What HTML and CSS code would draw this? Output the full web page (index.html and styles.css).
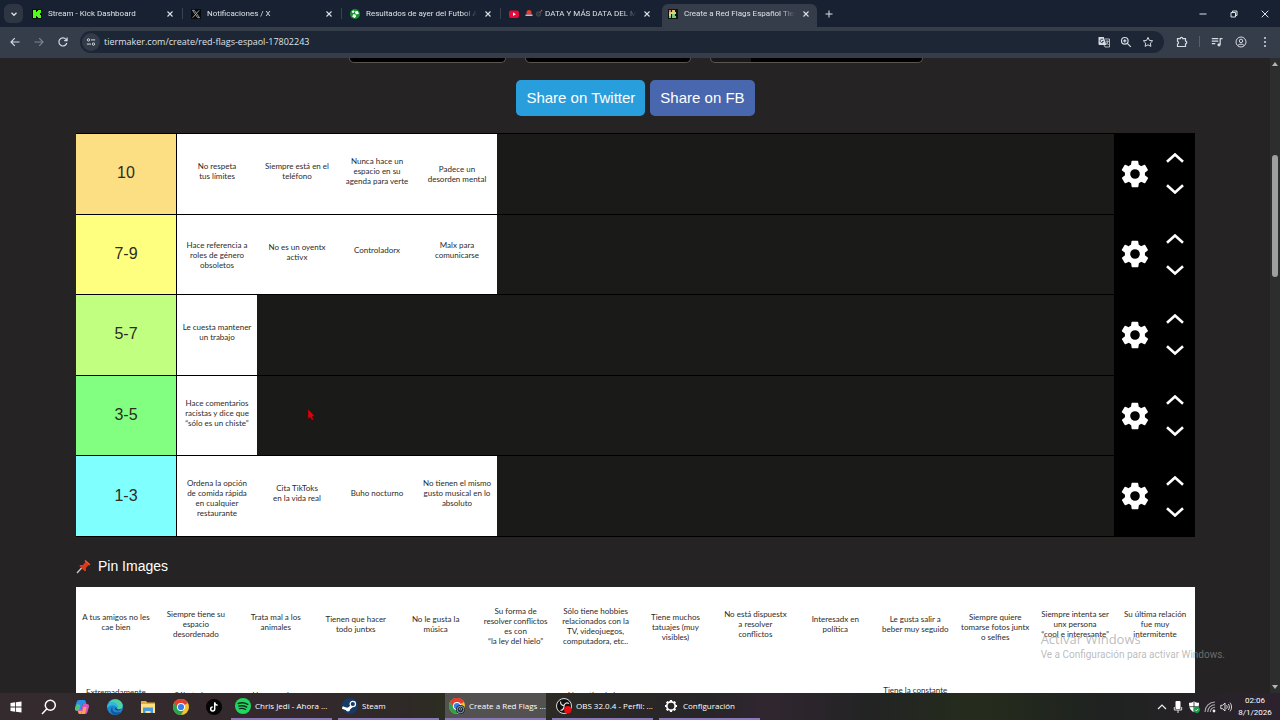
FILE: index.html
```html
<!DOCTYPE html>
<html lang="es">
<head>
<meta charset="utf-8">
<title>Create a Red Flags Español Tier List</title>
<link rel="stylesheet" href="styles.css">
</head>
<body>
<svg class="defs" aria-hidden="true">
  <symbol id="i-x" viewBox="0 0 10 10"><path d="M2.5 2.5l5 5m0-5l-5 5" fill="none" stroke="currentColor" stroke-width="1.1"/></symbol>
  <symbol id="i-gear" viewBox="0 0 24 24"><path fill="currentColor" fill-rule="evenodd" d="M19.4 13a7.500 7.500 0 0 0 0-2l2.100-1.600a.5.5 0 0 0 .1-.7l-2-3.400a.5.5 0 0 0-.6-.2l-2.500 1a7.300 7.300 0 0 0-1.700-1l-.4-2.700a.5.5 0 0 0-.5-.4h-4a.5.5 0 0 0-.5.4L9 5.100a7.700 7.700 0 0 0-1.700 1l-2.500-1a.5.5 0 0 0-.6.2l-2 3.400a.5.5 0 0 0 .1.7L4.500 11a7.900 7.900 0 0 0 0 2l-2.100 1.600a.5.5 0 0 0-.1.700l2 3.400c.1.2.4.3.6.2l2.500-1c.5.4 1.100.7 1.700 1l.4 2.700c0 .2.200.4.5.4h4c.3 0 .5-.2.5-.4l.4-2.700a7.300 7.300 0 0 0 1.700-1l2.500 1c.2.1.5 0 .6-.2l2-3.400a.5.5 0 0 0-.1-.7zM12 15.600a3.600 3.600 0 1 1 0-7.200 3.600 3.600 0 0 1 0 7.200z"/></symbol>
  <symbol id="i-up" viewBox="0 0 18 10"><path d="M1 8.800L9 1.500l8 7.300" fill="none" stroke="currentColor" stroke-width="2.600"/></symbol>
  <symbol id="i-down" viewBox="0 0 18 10"><path d="M1 1.200L9 8.500l8-7.300" fill="none" stroke="currentColor" stroke-width="2.600"/></symbol>
  <symbol id="i-chrome" viewBox="0 0 16 16"><circle cx="8" cy="8" r="8" fill="#f5c32c"/><path d="M8 8L1.070 4A8 8 0 0 1 14.930 4z" fill="#e2402f"/><path d="M1.070 4A8 8 0 0 0 8 16l3.460-6L8 8 4.500 10z" fill="#2da24c"/><path d="M1.070 4L4.540 10 8 8V4z" fill="#2da24c"/><path d="M1.070 4A8 8 0 0 1 14.930 4H8a4 4 0 0 0-3.700 2.500L3 7.300z" fill="#e2402f"/><circle cx="8" cy="8" r="4" fill="#fff"/><circle cx="8" cy="8" r="3.100" fill="#3b7ded"/></symbol>
</svg>

<header class="tabstrip">
  <button class="tab-search" aria-label="Buscar pestañas"><svg viewBox="0 0 10 10"><path d="M2.500 3.800L5 6.300l2.500-2.500" fill="none" stroke="currentColor" stroke-width="1.300"/></svg></button>
  <nav class="tabs">
    <div class="tab"><svg class="favicon" viewBox="0 0 10 10"><path fill="#071207" d="M0 0h10v10H0z"/><path fill="#53fc18" d="M1 1h3v2h1V2h1V1h3v3H8v2h1v3H6V8H5V7H4v2H1z"/></svg><span class="tab-title">Stream - Kick Dashboard</span><button class="close" aria-label="Cerrar"><svg><use href="#i-x"/></svg></button></div>
    <div class="tab"><svg class="favicon" viewBox="0 0 10 10"><path fill="#08090b" d="M0 0h10v10H0z"/><path d="M1.500 1.300h1.800l5.200 7.400H6.700z" fill="none" stroke="#b9bcc0" stroke-width=".8"/><path d="M8.200 1.300L5.500 4.400M4.500 5.500L1.700 8.700" stroke="#b9bcc0" stroke-width=".8"/></svg><span class="tab-title">Notificaciones / X</span><button class="close" aria-label="Cerrar"><svg><use href="#i-x"/></svg></button></div>
    <div class="tab"><svg class="favicon" viewBox="0 0 10 10"><circle cx="5" cy="5" r="5" fill="#14922c"/><path fill="#fff" d="M1.500 2.500l2-1.300 1.200 1.600L3 4.300zM5.500 2L8 2.200l.8 2.500-2.200.7L5 4zM3.300 5.300l2.200.2.700 2.200-1.900 1.400L2.200 7.500z"/></svg><span class="tab-title">Resultados de ayer del Futbol A</span><button class="close" aria-label="Cerrar"><svg><use href="#i-x"/></svg></button></div>
    <div class="tab"><svg class="favicon" viewBox="0 0 10 10"><rect y="1.500" width="10" height="7.500" rx="2" fill="#e8093b"/><path d="M4 3.500v3.400l2.900-1.700z" fill="#fff"/></svg><span class="tab-title"><svg class="emoji" viewBox="0 0 8 8"><path fill="#ee3730" d="M1.500 5.500V3.500a2.500 2.500 0 0 1 5 0v2z"/><path fill="#b8c0ca" d="M.5 5.500h7V7h-7z"/></svg><svg class="emoji" viewBox="0 0 8 8"><circle cx="3.500" cy="5" r="2.300" fill="#30353c" stroke="#5c636c" stroke-width=".5"/><path d="M5 3.500l1.300-1.700" stroke="#8a8377" stroke-width=".8"/><circle cx="6.600" cy="1.500" r=".8" fill="#d7472c"/></svg>DATA Y MÁS DATA DEL M</span><button class="close" aria-label="Cerrar"><svg><use href="#i-x"/></svg></button></div>
    <div class="tab active"><svg class="favicon" viewBox="0 0 10 10"><path fill="#111" d="M0 0h10v10H0z"/><path fill="#d8796b" d="M1 1h2v2H1z"/><path fill="#e5bc70" d="M1 3h2v2H1zM4 1h3v2H4z"/><path fill="#d8d676" d="M1 5h2v2H1zM3 3h5v2H3z"/><path fill="#7bc77d" d="M1 7h2v2H1zM4 5h3v2H4zM4 7h4v2H4z"/></svg><span class="tab-title">Create a Red Flags Español Tier</span><button class="close" aria-label="Cerrar"><svg><use href="#i-x"/></svg></button></div>
  </nav>
  <button class="new-tab" aria-label="Nueva pestaña"><svg viewBox="0 0 10 10"><path d="M5 1.500v7M1.500 5h7" stroke="currentColor"/></svg></button>
  <div class="window-controls">
    <button aria-label="Minimizar"><svg viewBox="0 0 10 10"><path d="M1.500 5h7" stroke="currentColor"/></svg></button>
    <button aria-label="Restaurar"><svg viewBox="0 0 10 10"><path d="M2 3.500h4.500V8H2zM3.500 3.500V2H8v4.500H6.500" fill="none" stroke="currentColor"/></svg></button>
    <button aria-label="Cerrar ventana"><svg viewBox="0 0 10 10"><path d="M1.700 1.700l6.600 6.600m0-6.600L1.700 8.300" stroke="currentColor"/></svg></button>
  </div>
</header>

<div class="toolbar">
  <button class="tool" aria-label="Atrás"><svg viewBox="0 0 12 12"><path d="M10.500 6H2m3.800-3.800L2 6l3.800 3.800" fill="none" stroke="currentColor" stroke-width="1.200"/></svg></button>
  <button class="tool dim" aria-label="Adelante"><svg viewBox="0 0 12 12"><path d="M1.500 6H10M6.200 2.200L10 6 6.200 9.800" fill="none" stroke="currentColor" stroke-width="1.200"/></svg></button>
  <button class="tool" aria-label="Recargar"><svg viewBox="0 0 12 12"><path d="M9.800 7A4 4 0 1 1 9 3.400l1 1M10.100 1.600v3H7.200" fill="none" stroke="currentColor" stroke-width="1.200"/></svg></button>
  <div class="omnibox">
    <button class="site-info" aria-label="Información del sitio"><svg viewBox="0 0 12 12"><g fill="none" stroke="currentColor" stroke-width="1.200"><circle cx="3" cy="3.500" r="1.400"/><path d="M6 3.500h5M1 8.500h5"/><circle cx="9" cy="8.500" r="1.400"/></g></svg></button>
    <input class="url" aria-label="Dirección" value="tiermaker.com/create/red-flags-espaol-17802243">
    <button class="tool" aria-label="Traducir"><svg viewBox="0 0 12 12"><path fill="currentColor" d="M.5 1h5.300l2.500 8H1.500a1 1 0 0 1-1-1z"/><path d="M7 3h4.500v8H7l-1-2M7.500 5.200h3.400M9.200 4.500v.7M10.200 5.300c-.3 1.500-1.200 2.500-2.200 3.200M8.300 6.500l2.300 2.500" fill="none" stroke="currentColor" stroke-width=".8"/><path d="M5.300 4a1.700 1.700 0 1 0 .1 1.500H4" fill="none" stroke="#1e2636" stroke-width=".8"/></svg></button>
    <button class="tool" aria-label="Zoom"><svg viewBox="0 0 12 12"><g fill="none" stroke="currentColor" stroke-width="1.200"><circle cx="4.800" cy="4.800" r="3.300"/><path d="M7.300 7.300l3.500 3.500M3.200 4.800h3.200M4.800 3.200v3.200"/></g></svg></button>
    <button class="tool" aria-label="Favoritos"><svg viewBox="0 0 12 12"><path d="M6 1.400l1.400 3 3.300.4-2.400 2.300.6 3.300L6 8.800l-2.900 1.600.6-3.300L1.300 4.800l3.300-.4z" fill="none" stroke="currentColor"/></svg></button>
  </div>
  <div class="toolbar-end">
    <button class="tool" aria-label="Extensiones"><svg viewBox="0 0 12 12"><path d="M1.500 2.700h2.700a1.300 1.300 0 0 1 2.600 0h2.700v2.500a1.300 1.300 0 0 1 0 2.600v2.700h-8V8a1.400 1.400 0 0 0 0-2.700z" fill="none" stroke="currentColor" stroke-width="1.200"/></svg></button>
    <span class="divider"></span>
    <button class="tool" aria-label="Contenido multimedia"><svg viewBox="0 0 12 12"><path d="M.8 2.700h6.500M.8 5.200h6.500M.8 7.700h3.500M9.200 8.500V2.700h2.300" fill="none" stroke="currentColor" stroke-width="1.200"/><circle cx="8" cy="8.800" r="1.600" fill="currentColor"/></svg></button>
    <button class="tool" aria-label="Perfil"><svg viewBox="0 0 12 12"><g fill="none" stroke="currentColor"><circle cx="6" cy="6" r="5"/><circle cx="6" cy="4.900" r="1.700"/><path d="M2.700 9.500a4.600 4.600 0 0 1 6.600 0"/></g></svg></button>
    <button class="tool" aria-label="Menú"><svg viewBox="0 0 12 12" fill="currentColor"><circle cx="6" cy="2" r="1"/><circle cx="6" cy="6" r="1"/><circle cx="6" cy="10" r="1"/></svg></button>
  </div>
</div>

<div class="viewport">
  <main class="page">
    <div class="cut-row"><div class="cut cut-s"></div><div class="cut cut-m"></div><div class="cut cut-l"></div></div>
    <div class="share"><button class="twitter">Share on Twitter</button><button class="fb">Share on FB</button></div>

    <section class="tiers">
      <div class="tier">
        <div class="label c-10">10</div>
        <div class="items"><p class="card d">No respeta<br>tus límites</p><p class="card d">Siempre está en el<br>teléfono</p><p class="card b">Nunca hace un<br>espacio en su<br>agenda para verte</p><p class="card e">Padece un<br>desorden mental</p></div>
        <div class="controls"><button class="gear" aria-label="Ajustes"><svg><use href="#i-gear"/></svg></button><div class="arrows"><button aria-label="Subir"><svg><use href="#i-up"/></svg></button><button aria-label="Bajar"><svg><use href="#i-down"/></svg></button></div></div>
      </div>
      <div class="tier">
        <div class="label c-7">7-9</div>
        <div class="items"><p class="card c">Hace referencia a<br>roles de género<br>obsoletos</p><p class="card d">No es un oyentx<br>activx</p><p class="card e">Controladorx</p><p class="card c">Malx para<br>comunicarse</p></div>
        <div class="controls"><button class="gear" aria-label="Ajustes"><svg><use href="#i-gear"/></svg></button><div class="arrows"><button aria-label="Subir"><svg><use href="#i-up"/></svg></button><button aria-label="Bajar"><svg><use href="#i-down"/></svg></button></div></div>
      </div>
      <div class="tier">
        <div class="label c-5">5-7</div>
        <div class="items"><p class="card d">Le cuesta mantener<br>un trabajo</p></div>
        <div class="controls"><button class="gear" aria-label="Ajustes"><svg><use href="#i-gear"/></svg></button><div class="arrows"><button aria-label="Subir"><svg><use href="#i-up"/></svg></button><button aria-label="Bajar"><svg><use href="#i-down"/></svg></button></div></div>
      </div>
      <div class="tier">
        <div class="label c-3">3-5</div>
        <div class="items"><p class="card b">Hace comentarios<br>racistas y dice que<br>“sólo es un chiste”</p></div>
        <div class="controls"><button class="gear" aria-label="Ajustes"><svg><use href="#i-gear"/></svg></button><div class="arrows"><button aria-label="Subir"><svg><use href="#i-up"/></svg></button><button aria-label="Bajar"><svg><use href="#i-down"/></svg></button></div></div>
      </div>
      <div class="tier">
        <div class="label c-1">1-3</div>
        <div class="items"><p class="card b">Ordena la opción<br>de comida rápida<br>en cualquier<br>restaurante</p><p class="card d">Cita TikToks<br>en la vida real</p><p class="card f">Buho nocturno</p><p class="card b">No tienen el mismo<br>gusto musical en lo<br>absoluto</p></div>
        <div class="controls"><button class="gear" aria-label="Ajustes"><svg><use href="#i-gear"/></svg></button><div class="arrows"><button aria-label="Subir"><svg><use href="#i-up"/></svg></button><button aria-label="Bajar"><svg><use href="#i-down"/></svg></button></div></div>
      </div>
    </section>

    <h2 class="pin"><svg viewBox="0 0 16 16"><path d="M1 15l5.500-6" stroke="#c4cad6" stroke-width="1.300"/><path fill="#d93a1c" d="M9.300 1.700l5.200 4.800-.9 1-1.200-.2-2.500 2.600.2 2.300-1.200 1.200-5.600-5.300 1.200-1.200 2.400.1L9.200 4.200 8.500 2.700z"/><path fill="#f0654a" d="M9.500 2.200l4.500 4.100-.8.400-4-3.600z"/></svg>Pin Images</h2>

    <section class="pool">
      <p class="card c">A tus amigos no les<br>cae bien</p><p class="card b">Siempre tiene su<br>espacio<br>desordenado</p><p class="card c">Trata mal a los<br>animales</p><p class="card d">Tienen que hacer<br>todo juntxs</p><p class="card d">No le gusta la<br>música</p><p class="card a">Su forma de<br>resolver conflictos<br>es con<br>“la ley del hielo”</p><p class="card a">Sólo tiene hobbies<br>relacionados con la<br>TV, videojuegos,<br>computadora, etc..</p><p class="card c">Tiene muchos<br>tatuajes (muy<br>visibles)</p><p class="card b">No está dispuestx<br>a resolver<br>conflictos</p><p class="card d">Interesadx en<br>política</p><p class="card d">Le gusta salir a<br>beber muy seguido</p><p class="card c">Siempre quiere<br>tomarse fotos juntx<br>o selfies</p><p class="card b">Siempre intenta ser<br>unx persona<br>“cool e interesante”</p><p class="card b">Su última relación<br>fue muy<br>intermitente</p>
      <p class="card a">Extremadamente</p><p class="card b">Sólo te hace</p><p class="card b">Hace muchos</p><p class="card"></p><p class="card"></p><p class="card"></p><p class="card b">No entiende los</p><p class="card"></p><p class="card"></p><p class="card"></p><p class="card z">Tiene la constante</p><p class="card"></p><p class="card"></p><p class="card"></p>
    </section>
  </main>
  <div class="scrollbar"><svg viewBox="0 0 8 8"><path d="M1 6l3-4 3 4z" fill="#b5b5b5"/></svg><div class="track"><div class="thumb"></div></div><svg viewBox="0 0 8 8"><path d="M1 2l3 4 3-4z" fill="#b5b5b5"/></svg></div>
  <svg class="cursor" viewBox="0 0 8 12"><path d="M1 0l6.500 7-2.300.4 1.300 3-1.800.9-1.400-3L1 9.800z" fill="#d8050f" stroke="#5c0307" stroke-width=".5"/></svg>
  <div class="watermark"><div class="wm-title">Activar Windows</div><div>Ve a Configuración para activar Windows.</div></div>
</div>

<footer class="taskbar">
  <div class="launchers">
    <button aria-label="Inicio"><svg viewBox="0 0 16 16"><path fill="#fff" d="M2.500 4l4.700-.7v4.300H2.500zM8 3.200l5.500-.8v5.200H8zM2.500 8.400h4.700v4.300L2.500 12zM8 8.400h5.500v5.200L8 12.800z"/></svg></button>
    <button aria-label="Buscar"><svg viewBox="0 0 16 16"><g fill="none" stroke="#fff" stroke-width="1.500"><circle cx="9.300" cy="6.300" r="5"/><path d="M5.700 10L1 15"/></g></svg></button>
    <button aria-label="Copilot"><svg viewBox="0 0 16 16"><path fill="#2b8fe8" d="M5 1h5c1 0 1.500.6 1.800 1.500L12.500 5H9L7 11H3C1 11 .7 9.500 1.100 8l1.500-5C3 1.700 3.700 1 5 1z"/><path fill="#4fc47c" d="M3 5l-2 4c-.5 2 .5 3 2 3h2l1.500-6z"/><path fill="#d957b4" d="M11 15H6c-1 0-1.500-.6-1.800-1.500L3.500 11H7l2-6h4c2 0 2.300 1.500 1.900 3l-1.500 5c-.4 1.300-1.100 2-2.400 2z"/><path fill="#f4a34b" d="M4 12h4l-1 3H6c-1 0-1.600-.6-2-3z"/><path fill="#f8a060" d="M9.500 8h3l-1.500 7H7.500z"/></svg></button>
    <button aria-label="Edge"><svg viewBox="0 0 16 16"><circle cx="8" cy="8" r="8" fill="#1e88d2"/><path fill="#4ed3a2" d="M2 4.200C4-.6 12-1.600 15.200 4.500c1.300 3-.2 5.500-2.700 5.500-2 0-3-.8-2.200-1.700C11 7 10 4.700 7.200 4.300 5 4 3 4.500 2 6z"/><path fill="#31b8dc" d="M.2 7C1 3 5 2.300 7.700 3.400 10.300 4.500 11 7 9.500 8.500 8.300 5.700 3.500 5.400.2 9z"/><path fill="#14569d" d="M5.500 8c-1 4 2.300 7 8.300 4.800C11 17.500 4.200 16 3.800 12c-.1-1.700.6-3.100 1.700-4z"/><path fill="#2f292f" d="M9.600 8.200c-1.300 2 1 3.200 4.600 2.100-2 1.800-6.500 1.300-6-1z"/></svg></button>
    <button aria-label="Explorador"><svg viewBox="0 0 16 16"><path fill="#e5a93a" d="M1 2h5l1.300 1.500H15V14H1z"/><path fill="#ffdf7e" d="M1 5h14v9H1z"/><path fill="#4a9bdc" d="M3 8.500h10V14h-2.500v-2h-5v2H3z"/></svg></button>
    <button aria-label="Chrome"><svg><use href="#i-chrome"/></svg></button>
    <button aria-label="TikTok"><svg viewBox="0 0 16 16"><circle cx="8" cy="8" r="8" fill="#050505"/><path d="M8.700 3.200v6.700a2 2 0 1 1-2-2M8.700 3.500c.2 1.700 1.200 2.600 2.900 2.700" fill="none" stroke="#fff" stroke-width="1.500"/></svg></button>
  </div>
  <div class="windows">
    <button class="win"><svg viewBox="0 0 16 16"><circle cx="8" cy="8" r="8" fill="#1ed760"/><g fill="none" stroke="#12251a" stroke-linecap="round"><path d="M3.300 5.500c3-1 6.600-.7 9.400.9" stroke-width="1.500"/><path d="M3.800 8.200c2.600-.8 5.500-.5 7.900.9" stroke-width="1.300"/><path d="M4.200 10.700c2.200-.6 4.500-.4 6.500.8" stroke-width="1.100"/></g></svg><span>Chris Jedi - Ahora ...</span></button>
    <button class="win"><svg viewBox="0 0 16 16"><circle cx="8" cy="8" r="8" fill="#153b68"/><path d="M.3 9.500L6 11.500l4.700-4.300" fill="none" stroke="#fff" stroke-width="2.700"/><circle cx="10.800" cy="6" r="2.700" fill="#153b68" stroke="#fff" stroke-width="1.200"/><circle cx="6" cy="11.600" r="2" fill="#fff"/></svg><span>Steam</span></button>
    <button class="win current"><svg viewBox="0 0 16 16"><use href="#i-chrome"/><circle cx="11.500" cy="11.500" r="4.500" fill="#1b2636"/><circle cx="11.500" cy="11.500" r="3.300" fill="none" stroke="#9fb2c8" stroke-width=".8"/><circle cx="11.500" cy="11" r="1.200" fill="none" stroke="#9fb2c8" stroke-width=".7"/></svg><span>Create a Red Flags ...</span></button>
    <button class="win"><svg viewBox="0 0 16 16"><circle cx="8" cy="8" r="7.500" fill="#111" stroke="#ddd"/><g fill="none" stroke="#ddd" stroke-width="1.200"><path d="M4.500 3.500c0 3 1.500 4.200 4 4.200M13 5.500c-2.500-1.300-4.500-.2-5 2.300M4.500 12.500c2.500-.5 3.700-2.300 3.500-4.700"/></g><circle cx="11.800" cy="11.800" r="3.700" fill="#ed0d12"/></svg><span>OBS 32.0.4 - Perfil: ...</span></button>
    <button class="win"><svg viewBox="0 0 16 16"><circle cx="8" cy="8" r="4.200" fill="none" stroke="#fff" stroke-width="1.700"/><path d="M8 2v2M8 12v2M2 8h2M12 8h2M3.700 3.700l1.400 1.400M10.900 10.900l1.400 1.400M3.700 12.300l1.400-1.400M10.900 5.100l1.400-1.400" stroke="#fff" stroke-width="2.200"/></svg><span>Configuración</span></button>
  </div>
  <div class="tray">
    <svg viewBox="0 0 12 12"><path d="M2 8l4-4 4 4" fill="none" stroke="#eee" stroke-width="1.200"/></svg>
    <svg viewBox="0 0 12 12"><rect x="3.500" y="0" width="5" height="8" rx="1" fill="#fff"/><path d="M2.300 6v3h7.400V6M6 9v3" fill="none" stroke="#ddd"/></svg>
    <svg viewBox="0 0 12 12"><path fill="#fff" d="M6 .5c1.500 1 3 1.300 5 1.300 0 4.500-1 7.500-5 9.400C2 9.300 1 6.300 1 1.800c2 0 3.500-.3 5-1.300z"/><path d="M6 1v10M1.300 5.700h9.400" stroke="#282828" stroke-width=".8"/><circle cx="8.800" cy="8.800" r="3.100" fill="#12a04b"/><path d="M7.300 8.800l1.100 1.100 1.900-2" fill="none" stroke="#fff" stroke-width=".8"/></svg>
    <svg viewBox="0 0 12 12"><g fill="none" stroke="#aaa" stroke-width="1.100"><path d="M1 11A10 10 0 0 1 11 1M3.700 11A7.300 7.300 0 0 1 11 3.700M6.300 11A4.700 4.700 0 0 1 11 6.300"/></g><circle cx="10" cy="10" r="1.400" fill="#eee"/></svg>
    <svg viewBox="0 0 12 12"><g fill="none" stroke="#eee" stroke-width=".9"><path d="M.8 4.300h1.800L5 2v8L2.600 7.700H.8zM6.600 4.300c.8 1 .8 2.400 0 3.400M8.300 3c1.400 1.700 1.400 4.300 0 6M10 1.700c2 2.500 2 6.100 0 8.600"/></g></svg>
    <div class="clock"><div>02:06</div><div>8/1/2026</div></div>
  </div>
</footer>
</body>
</html>
```

FILE: styles.css
```css
* { box-sizing: border-box; }

body {
  margin: 0;
  height: 100vh;
  display: flex;
  flex-direction: column;
  overflow: hidden;
  background: #252323;
  color: #fff;
  font-family: "Open Sans", "Noto Sans", sans-serif;
}

button {
  display: flex;
  align-items: center;
  justify-content: center;
  padding: 0;
  border: 0;
  background: none;
  color: inherit;
  font: inherit;
}

svg { display: block; flex: none; }
.defs { position: absolute; width: 0; height: 0; }

/* Tab strip */
.tabstrip {
  flex: none;
  display: flex;
  align-items: center;
  height: 27px;
  padding: 0 0 0 4px;
  background: #182131;
  color: #dde1e8;
  font-family: Roboto, "Noto Sans", sans-serif;
  font-size: 8px;
}
.tab-search { width: 19px; height: 19px; border-radius: 6px; background: #2f3643; }
.tab-search svg { width: 10px; height: 10px; }
.tabs { display: flex; align-self: stretch; padding-left: 1px; }
.tab {
  display: flex;
  align-items: center;
  width: 159px;
  padding: 0 8px;
  position: relative;
}
.tab:not(.active):not(:nth-child(4))::after {
  content: "";
  position: absolute;
  right: 0;
  top: 8px;
  width: 1px;
  height: 11px;
  background: #384151;
}
.tab.active::before {
  content: "";
  position: absolute;
  inset: 4px 2px 0;
  border-radius: 6px 6px 0 0;
  background: #353c4a;
}
.tab > * { position: relative; }
.favicon { width: 10px; height: 10px; margin-right: 6px; }
.tab-title {
  flex: 1;
  overflow: hidden;
  white-space: nowrap;
  margin-right: 6px;
  mask-image: linear-gradient(90deg, #000 88%, transparent);
}
.emoji { display: inline-block; width: 8px; height: 8px; margin-right: 2px; vertical-align: -1px; }
.close svg { width: 10px; height: 10px; }
.new-tab { width: 20px; }
.new-tab svg { width: 10px; height: 10px; }
.window-controls { display: flex; margin-left: auto; }
.window-controls button { width: 31px; height: 27px; }
.window-controls svg { width: 10px; height: 10px; }

/* Toolbar */
.toolbar {
  flex: none;
  display: flex;
  align-items: center;
  height: 31px;
  padding: 0 3px 2px;
  background: #353c4a;
  color: #d6dae2;
}
.tool { width: 24px; height: 22px; }
.tool svg { width: 12px; height: 12px; }
.dim { color: #7d8490; }
.omnibox {
  flex: 1;
  display: flex;
  align-items: center;
  height: 22px;
  margin-left: 5px;
  padding: 0 5px 0 2px;
  border-radius: 11px;
  background: #1d2635;
}
.omnibox .tool { width: 22px; }
.site-info { width: 18px; height: 18px; border-radius: 9px; background: #333a48; }
.site-info svg { width: 10px; height: 10px; }
.url {
  flex: 1;
  min-width: 0;
  padding: 0 0 0 4px;
  border: 0;
  outline: 0;
  background: none;
  color: #dde1e8;
  font: 9px "Open Sans", "Noto Sans", sans-serif;
}
.toolbar-end { display: flex; align-items: center; padding-left: 6px; }
.divider { width: 1px; height: 11px; margin: 0 5px; background: #566072; }

/* Page */
.viewport { flex: 1; min-height: 0; display: flex; position: relative; overflow: hidden; }
.page { flex: 1; min-width: 0; padding: 0 75px 0 76px; }
.cut-row { display: flex; justify-content: center; gap: 19px; }
.cut { height: 5px; border: 1px solid #5a5753; border-top: 0; border-radius: 0 0 5px 5px; background: #000; }
.cut-s { width: 157px; }
.cut-m { width: 166px; }
.cut-l { width: 213px; background: linear-gradient(90deg, #191818 40px, #000 40px); }
.share { display: flex; justify-content: center; gap: 5px; padding: 17px 0; }
.share button {
  height: 36px;
  padding: 0 10px 1px;
  border-radius: 5px;
  font: 15px "Liberation Sans", Arial, sans-serif;
}
.twitter { background: #289edc; }
.fb { background: #4967af; }

.tiers {
  display: grid;
  grid-template-rows: repeat(5, 1fr);
  gap: 1px;
  min-height: 404px;
  padding: 1px 0;
  background: #000;
}
.tier { display: grid; grid-template-columns: 100px 1fr 80px; column-gap: 1px; }
.label {
  display: flex;
  align-items: center;
  justify-content: center;
  padding-bottom: 1px;
  color: #2d2b22;
  font: 16px "Liberation Sans", Arial, sans-serif;
}
.c-10 { background: #fbdf82; }
.c-7 { background: #ffff7f; }
.c-5 { background: #c0ff7f; }
.c-3 { background: #82ff80; }
.c-1 { background: #80ffff; }
.items { display: flex; background: #1a1a18; }
.card {
  width: 80px;
  margin: 0;
  background: #fff;
  color: #2b2b2b;
  font: 8px/10px Lato, "Open Sans", sans-serif;
  text-align: center;
  white-space: nowrap;
}
/* Vertical start of the caption in a card */
.z { padding-top: 17px; }
.a { padding-top: 19px; }
.b { padding-top: 22px; }
.c { padding-top: 25px; }
.d { padding-top: 27px; }
.e { padding-top: 30px; }
.f { padding-top: 32px; }

.controls { display: grid; grid-template-columns: 1fr 1fr; align-items: center; }
.gear svg { width: 32px; height: 32px; }
.arrows { display: flex; flex-direction: column; align-items: center; gap: 21px; }
.arrows svg { width: 18px; height: 10px; }

.pin {
  display: flex;
  align-items: center;
  gap: 6px;
  margin: 0;
  padding: 20px 0 12px;
  font: 14px/18px "Liberation Sans", Arial, sans-serif;
}
.pin svg { width: 16px; height: 16px; }
.pool {
  display: grid;
  grid-template-columns: repeat(auto-fill, minmax(79px, 1fr));
  grid-auto-rows: 81px;
  background: #fff;
}
.pool .card { width: auto; }

.scrollbar {
  flex: none;
  display: flex;
  flex-direction: column;
  align-items: center;
  width: 10px;
  padding: 2px 0;
  background: #2c2e2d;
}
.scrollbar svg { width: 8px; height: 8px; }
.track { flex: 1; padding-top: 87px; }
.thumb { width: 6px; height: 122px; border-radius: 3px; background: #9f9f9f; }

.cursor { position: absolute; left: 307px; top: 351px; width: 8px; height: 12px; }
.watermark {
  position: absolute;
  right: 55px;
  bottom: 31px;
  color: rgba(150, 150, 150, 0.65);
  font: 10px/15px Roboto, "Noto Sans", sans-serif;
  white-space: nowrap;
}
.wm-title { font-family: "Open Sans", "Noto Sans", sans-serif; font-size: 13px; }

/* Taskbar */
.taskbar {
  flex: none;
  display: flex;
  height: 27px;
  background: linear-gradient(90deg, #342b2e, #33292d 25%, #2e2926 32%, #2c3020 36%, #2b2a26 44%, #272527 55%, #302630 60%, #222323 68%, #252c1c 76%, #1f2220 86%, #2c222e);
  font-size: 8px;
}
.launchers { display: flex; width: 230px; }
.launchers button { flex: 1; }
.launchers svg { width: 16px; height: 16px; }
.windows { display: flex; gap: 6px; padding-left: 1px; }
.win {
  justify-content: flex-start;
  gap: 4px;
  width: 101px;
  padding-left: 4px;
  border-bottom: 2px solid #8a78bd;
  white-space: nowrap;
}
.win svg { width: 16px; height: 16px; }
.win.current { background: #535250; }
.tray { display: flex; align-items: center; gap: 4px; margin-left: auto; padding-right: 8px; }
.tray svg { width: 12px; height: 12px; }
.clock { width: 34px; margin-left: 2px; text-align: center; font-family: Roboto, "Noto Sans", sans-serif; line-height: 12px; }
```
